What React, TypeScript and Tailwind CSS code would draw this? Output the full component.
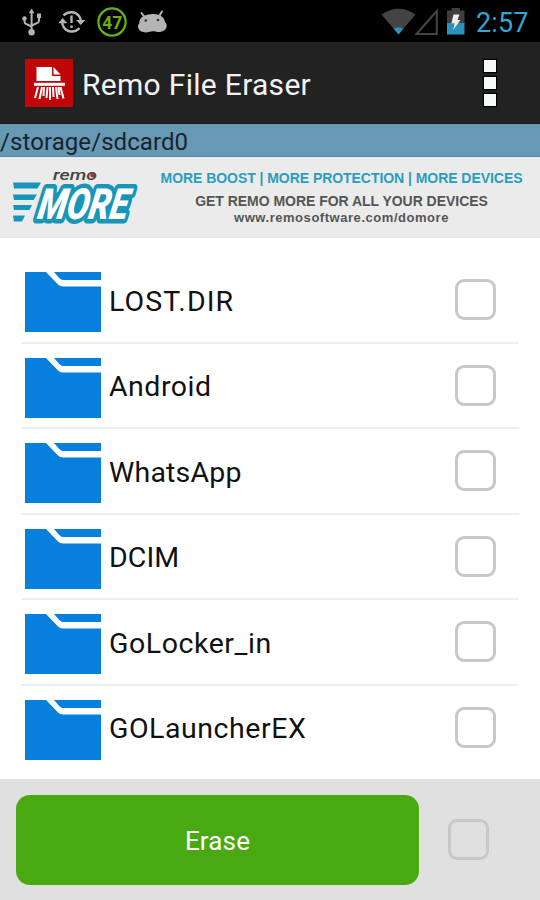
import { useState } from 'react';

const FOLDERS = [
  { name: 'LOST.DIR', tracking: 'tracking-[1.1px]' },
  { name: 'Android', tracking: 'tracking-[0.5px]' },
  { name: 'WhatsApp', tracking: 'tracking-[0.2px]' },
  { name: 'DCIM', tracking: 'tracking-[0.1px]' },
  { name: 'GoLocker_in', tracking: 'tracking-[0.55px]' },
  { name: 'GOLauncherEX', tracking: 'tracking-[0.55px]' },
];

interface CheckBoxProps {
  label: string;
  checked: boolean;
  onChange: (next: boolean) => void;
}

function CheckBox({ label, checked, onChange }: CheckBoxProps) {
  return (
    <button
      type="button"
      role="checkbox"
      aria-label={label}
      aria-checked={checked}
      onClick={() => onChange(!checked)}
      className="flex size-[41px] shrink-0 items-center justify-center rounded-[9px] border-3 border-[#c8c8c8]"
    >
      {checked && <span className="size-5 rounded-sm bg-[#0680dc]" />}
    </button>
  );
}

function StatusBar() {
  return (
    <header className="flex h-[42px] shrink-0 items-center justify-between bg-black">
      <svg width="180" height="42" viewBox="0 0 180 42" fill="none">
        {/* usb */}
        <g stroke="#b4b4b4" strokeWidth="2">
          <path d="M31.6 12v20M24.5 18v3.5q0 1.8 2 2.6l5.1 2.4M39 17.5v3q0 1.8-2 2.6l-5.4 2.4" />
        </g>
        <path d="M31.6 8.5l2.8 4.7h-5.6z" fill="#b4b4b4" />
        <circle cx="24.5" cy="18.5" r="2.2" fill="#b4b4b4" />
        <path d="M37 13.5h4v4.5h-4z" fill="#b4b4b4" />
        <circle cx="31.6" cy="32.3" r="3.2" fill="#b4b4b4" />
        {/* sync problem */}
        <g stroke="#b4b4b4" strokeWidth="2.4">
          <path d="M63.5 15.5c4-4.5 12-4.5 15.5.5 1.3 1.8 1.8 3.2 1.8 5" />
          <path d="M79.5 28c-4 4.7-12 4.7-15.5-.5-1.3-1.8-1.8-3.2-1.8-5" />
          <path d="M71.5 15.5V23M71.5 25.5V28" />
        </g>
        <path d="M76 20h9.4l-4.7 5zM58.2 23.2h9.2L62.6 18z" fill="#b4b4b4" />
        {/* battery percentage */}
        <circle cx="112" cy="22" r="13.6" stroke="#68b40c" strokeWidth="2.2" />
        <text
          x="112.3"
          y="28.5"
          textAnchor="middle"
          textLength="20"
          lengthAdjust="spacingAndGlyphs"
          className="fill-[#68b40c] font-['Roboto',sans-serif] text-[18.5px] font-bold"
        >
          47
        </text>
        {/* android */}
        <path d="M141.5 13l3.2 4.2M162 11.5l-2.8 4.5" stroke="#b4b4b4" strokeWidth="2" strokeLinecap="round" />
        <path
          d="M143.5 16q8.5-3.5 16.8-.5c3.2 1.7 4.5 4 4.6 6.5 2.5 1.5 2.4 6.5-.3 8-3 2.5-6.6 2.4-9 1.5-2.7-.7-4.5-.3-6 .3-4.600 1.400-9.600.3-11.100-3-1.200-2.600-.2-4.300.7-5.400 0-3 1.300-5.700 4.300-7.400z"
          fill="#b4b4b4"
        />
        <circle cx="145.8" cy="20.5" r="1.3" fill="#333" />
        <circle cx="158" cy="20" r="1.3" fill="#333" />
      </svg>

      <div className="flex items-center">
        <svg width="90" height="42" viewBox="380 0 90 42">
          <path d="M381.5 14.5q17-11.500 34 0L398.5 34.5z" fill="#444" />
          <path d="M393.600 28.800q4.900-3 9.800 0l-4.900 5.700z" fill="#2c91bd" />
          <path d="M416.500 34L436.800 11v23z" fill="none" stroke="#444" strokeWidth="2" />
          <path d="M447 10.500h4.500V8h8.500v2.500h4.500V24H447z" fill="#3d3d3d" />
          <path d="M447 23h17.500v11.500H447z" fill="#2c91bd" />
          <path d="M453.500 14.500h6l-2 5.500h3l-7.300 10 1.400-6.800h-3.200z" fill="#ececec" />
        </svg>
        <span className="w-[70px] pt-[5px] pl-[6px] text-[27px] tracking-[0.1px] whitespace-nowrap text-[#31a7d4]">
          2:57
        </span>
      </div>
    </header>
  );
}

function AppBar() {
  return (
    <div className="flex h-[82px] shrink-0 items-center border-b border-[#161b1d] bg-[#222] pl-[25px]">
      <svg width="48" height="48" viewBox="0 0 48 48" className="shrink-0">
        <path d="M0 0h48v48H0z" fill="#c00606" />
        <path d="M11.5 8H27v9h8.5v5h-24z" fill="#fff" />
        <path d="M28.5 8l7 7.5h-7z" fill="#fff" />
        <path d="M9 23.8h31v3H9z" fill="#fff" />
        <path
          d="M13 28l-3 11M17 28l-2.500 12M19 28l-.5 9M22.500 28l-1 11M25 28v13M28 28l.5 10M31 28l1.500 12M33.500 28l1 8M35.500 28l3 11.500"
          stroke="#fff"
          strokeWidth="2"
        />
      </svg>
      <h1 className="ml-[9px] pt-[3px] text-[30px] tracking-[0.3px] text-[#f3f3f3]">Remo File Eraser</h1>
      <button type="button" aria-label="More options" className="mr-[44px] ml-auto flex flex-col gap-[5px]">
        <span className="size-[12px] bg-[#f2fafa] shadow-[0_0_1px_1px_#000]" />
        <span className="size-[12px] bg-[#f2fafa] shadow-[0_0_1px_1px_#000]" />
        <span className="size-[12px] bg-[#f2fafa] shadow-[0_0_1px_1px_#000]" />
      </button>
    </div>
  );
}

function RemoMoreLogo() {
  return (
    <svg width="150" height="81" viewBox="0 0 150 81" className="shrink-0 overflow-visible">
      <path
        d="M13 25.5h28l-3.500 6H14zM13 37.500h24l-3.500 5.500H14zM13 48h19l-2.500 5H14zM13 58.500h12l-3 6H14z"
        fill="#1796b9"
      />
      {/* blue backing fills the gaps between the outlined letters */}
      <g transform="translate(36.5 61.5) skewX(-10)">
        <path d="M4-2L8-26H86L82-2z" fill="#1796b9" />
        <text
          textLength="90"
          lengthAdjust="spacingAndGlyphs"
          stroke="#1796b9"
          strokeWidth="9"
          strokeLinejoin="round"
          paintOrder="stroke"
          fill="#fff"
          className="font-['Roboto',sans-serif] text-[43px] font-black italic"
        >
          MORE
        </text>
      </g>
      <text
        x="53"
        y="22.5"
        textLength="44"
        lengthAdjust="spacingAndGlyphs"
        className="fill-[#444] font-['Roboto',sans-serif] text-[15.5px] font-medium italic"
      >
        remo
      </text>
      <circle cx="92.3" cy="18.5" r="2" fill="#c61a2c" />
    </svg>
  );
}

function Banner() {
  return (
    <section className="flex h-[81px] shrink-0 bg-[#ebebeb] font-['Liberation_Sans',Arial,sans-serif] font-bold">
      <RemoMoreLogo />
      <div className="flex w-[383px] flex-col items-center pt-[13px] whitespace-nowrap text-[#555]">
        <p className="text-[14px] leading-[17px] tracking-[-0.05px] text-[#2a9dc0]">
          MORE BOOST | MORE PROTECTION | MORE DEVICES
        </p>
        <p className="mt-[6px] text-[14px] leading-[17px] tracking-[-0.03px]">GET REMO MORE FOR ALL YOUR DEVICES</p>
        <p className="text-[13px] leading-[16px] tracking-[0.54px]">www.remosoftware.com/domore</p>
      </div>
    </section>
  );
}

function FolderIcon() {
  return (
    <svg width="76" height="60" viewBox="0 0 76 60" className="shrink-0" fill="#0680dc">
      <path d="M0 0h21l12 12.5q2 2 5 2h38V60H0z" />
      <path d="M29 0h47v8H38q-2 0-3.500-1.800z" />
    </svg>
  );
}

export default function App() {
  const [selected, setSelected] = useState<Set<string>>(new Set());
  const allSelected = selected.size === FOLDERS.length;

  const toggle = (name: string) => {
    const next = new Set(selected);
    if (next.has(name)) next.delete(name);
    else next.add(name);
    setSelected(next);
  };

  return (
    <div className="flex h-[900px] w-[540px] flex-col overflow-hidden bg-white font-['Roboto',sans-serif]">
      <StatusBar />
      <AppBar />
      <div className="h-[33px] shrink-0 border-b border-[#4f88a6] bg-[#6799b5] text-[24px] leading-[36px] tracking-[0.08px] text-[#17252e]">
        /storage/sdcard0
      </div>
      <Banner />

      <ul className="h-[541px] shrink-0 overflow-hidden px-[21px] pt-[20px]">
        {FOLDERS.map(({ name, tracking }) => (
          <li
            key={name}
            className="flex h-[85.5px] items-center border-b-2 border-[#eee] pr-[3px] pl-1 last:border-transparent"
          >
            <div className="flex items-center pt-[5px]">
              <FolderIcon />
              <span className={`ml-2 text-[28.5px] text-[#111] ${tracking}`}>{name}</span>
            </div>
            <div className="mr-[20px] ml-auto">
              <CheckBox label={name} checked={selected.has(name)} onChange={() => toggle(name)} />
            </div>
          </li>
        ))}
      </ul>

      <footer className="flex h-[121px] shrink-0 items-center gap-[29px] bg-[#e0e0e0] pl-4">
        <button
          type="button"
          onClick={() => setSelected(new Set())}
          className="h-[90px] w-[403px] rounded-[14px] bg-[#48a912] pt-[4px] text-[26px] tracking-[0.15px] text-white"
        >
          Erase
        </button>
        <CheckBox
          label="Select all"
          checked={allSelected}
          onChange={(next) => setSelected(next ? new Set(FOLDERS.map((f) => f.name)) : new Set())}
        />
      </footer>
    </div>
  );
}
